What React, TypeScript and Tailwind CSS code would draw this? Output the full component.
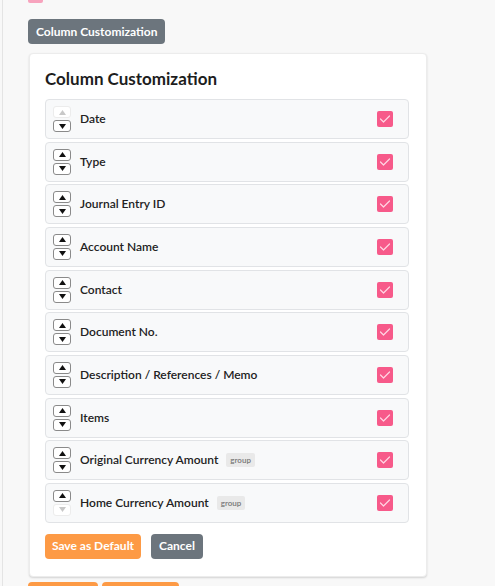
import React from 'react';

// --- Column list ---

const columns = [
    { label: 'Date', upDisabled: true },
    { label: 'Type' },
    { label: 'Journal Entry ID' },
    { label: 'Account Name' },
    { label: 'Contact' },
    { label: 'Document No.' },
    { label: 'Description / References / Memo' },
    { label: 'Items' },
    { label: 'Original Currency Amount', group: true },
    { label: 'Home Currency Amount', group: true, downDisabled: true },
];

const ArrowBtn = ({ dir, disabled }: { dir: 'up' | 'down'; disabled?: boolean }) => (
    <button
        type="button"
        className={
            'w-[18px] h-[12px] flex items-center justify-center rounded-[3px] bg-white border ' +
            (disabled ? 'border-[#ececec]' : 'border-[#8a8a8a]')
        }
    >
        <svg width="7" height="5" viewBox="0 0 7 5">
            {dir === 'up' ? (
                <path d="M3.5 0L7 5H0Z" fill={disabled ? '#c8c8c8' : '#111'} />
            ) : (
                <path d="M0 0H7L3.5 5Z" fill={disabled ? '#c8c8c8' : '#111'} />
            )}
        </svg>
    </button>
);

const CheckBox = () => (
    <div className="w-4 h-4 rounded-[2px] bg-[#f75a8a] flex items-center justify-center">
        <svg width="12" height="10" viewBox="0 0 12 10" fill="none">
            <path d="M1.5 5L4.5 8L10.5 2" stroke="#ffd6e3" strokeWidth="1.2" strokeLinecap="round" strokeLinejoin="round" />
        </svg>
    </div>
);

export default function App() {
    return (
        <div className="min-h-[586px] h-[586px] overflow-hidden bg-[#f8f8f8] font-['Lato','Liberation_Sans',sans-serif]">
            <div className="ml-[2px] border-l border-[#e4e4e4] h-full pl-[25px]">
                {/* scrolled-off checkbox */}
                <div className="w-[15px] h-[3px] bg-[#f7a3bd] rounded-b-[2px]" />

                <button
                    type="button"
                    className="mt-[16px] h-[25px] px-[8px] rounded-[4px] bg-[#6c757d] text-white text-[12px] font-bold"
                >
                    Column Customization
                </button>

                <div className="mt-[9px] ml-[1px] w-[398px] bg-white rounded-[4px] shadow-[0_1px_2px_rgba(0,0,0,0.15)] border border-[#ececec] pl-[15px] pr-[17px] pt-[13px] pb-[17px]">
                    <h2 className="text-[17px] font-bold text-[#1d1d1d] leading-[24px] mb-[8px]">Column Customization</h2>

                    <div className="flex flex-col gap-[2.67px]">
                        {columns.map(c => (
                            <div
                                key={c.label}
                                className="h-[40px] flex items-center pl-[7px] pr-[15px] bg-[#f8f9fa] border border-[#e1e3e6] rounded-[4px]"
                            >
                                <div className="flex flex-col gap-[2px]">
                                    <ArrowBtn dir="up" disabled={c.upDisabled} />
                                    <ArrowBtn dir="down" disabled={c.downDisabled} />
                                </div>
                                <span className="ml-[9px] text-[12px] font-semibold text-[#222]">{c.label}</span>
                                {c.group && (
                                    <span className="ml-[8px] px-[4px] py-[1px] rounded-[2px] bg-[#e9e9e9] text-[#777] text-[8px] font-semibold">
                                        group
                                    </span>
                                )}
                                <div className="ml-auto">
                                    <CheckBox />
                                </div>
                            </div>
                        ))}
                    </div>

                    <div className="mt-[11px] flex gap-[10px]">
                        <button type="button" className="h-[25px] w-[96px] rounded-[4px] bg-[#fd9a45] text-white text-[12px] font-bold">
                            Save as Default
                        </button>
                        <button type="button" className="h-[25px] w-[52px] rounded-[4px] bg-[#6c757d] text-white text-[12px] font-bold">
                            Cancel
                        </button>
                    </div>
                </div>

                <div className="mt-[5px] flex gap-[4px]">
                    <div className="w-[70px] h-[10px] rounded-t-[4px] bg-[#fd9a45]" />
                    <div className="w-[77px] h-[10px] rounded-t-[4px] bg-[#fd9a45]" />
                </div>
            </div>
        </div>
    );
}
